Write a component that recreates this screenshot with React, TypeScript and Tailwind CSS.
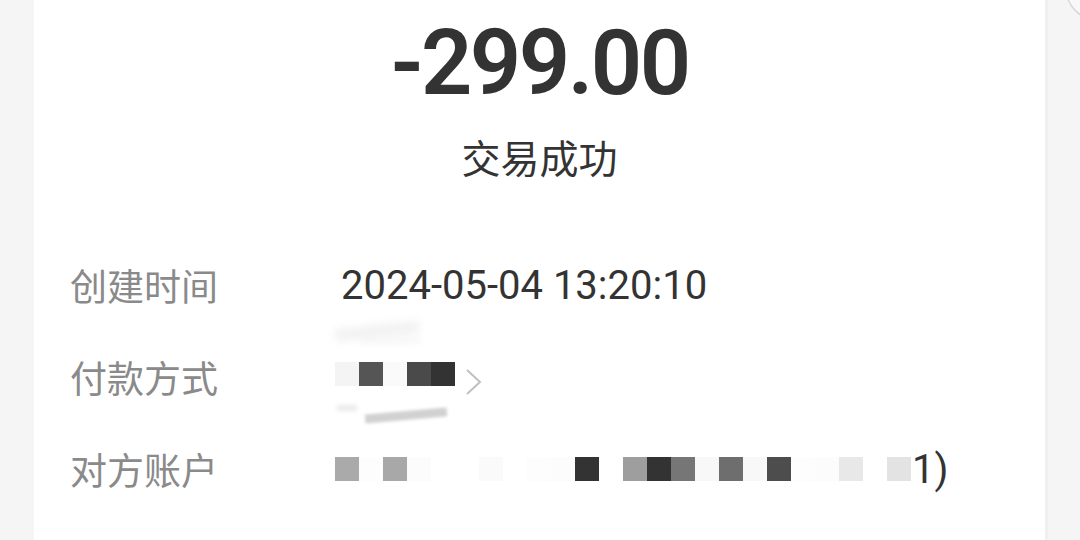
import React from "react";

const row3: string[] = [
  "#aaaaaa", "#fdfdfd", "#a8a8a8", "#fcfcfc", "#ffffff", "#ffffff", "#fafafa", "#ffffff",
  "#fdfdfd", "#fcfcfc", "#333333", "#ffffff", "#9e9e9e", "#333333", "#767676", "#f8f8f8",
  "#6e6e6e", "#f8f8f8", "#4d4d4d", "#fdfdfd", "#fcfcfc", "#e8e8e8", "#ffffff", "#e3e3e3",
];
const row2: string[] = ["#f4f4f4", "#555555", "#fafafa", "#4a4a4a", "#333333"];

function Blocks({ colors }: { colors: string[] }) {
  return (
    <div className="flex">
      {colors.map((c, i) => (
        <div key={i} className="w-[24px] h-[24px]" style={{ backgroundColor: c }} />
      ))}
    </div>
  );
}

export default function App() {
  const cjk = { fontFamily: '"Noto Sans CJK SC", "Noto Sans", sans-serif' };
  const num = { fontFamily: 'Roboto, "Liberation Sans", sans-serif' };
  return (
    <div className="w-[1080px] h-[540px] bg-[#f5f5f5] flex overflow-hidden">
      <div className="w-[34px] shrink-0" />
      <div className="w-[1011px] shrink-0 bg-white flex flex-col">
        <div className="flex flex-col items-center">
          <div
            className="mt-[19px] text-[90px] leading-[90px] font-semibold text-[#333333] tracking-[-2.5px]"
            style={num}
          >
            -299.00
          </div>
          <div className="mt-[27px] text-[39px] leading-[40px] text-[#333333]" style={cjk}>
            交易成功
          </div>
        </div>
        <div className="mt-[64px] pl-[36px] flex flex-col">
          <div className="h-[92px] flex items-center">
            <div className="w-[271px] text-[37px] text-[#8a8a8a]" style={cjk}>
              创建时间
            </div>
            <div className="text-[40px] text-[#333333]" style={num}>
              2024-05-04 13:20:10
            </div>
          </div>
          <div className="h-[92px] flex items-center">
            <div className="w-[265px] text-[37px] text-[#8a8a8a]" style={cjk}>
              付款方式
            </div>
            <div className="relative flex items-center">
              <div className="absolute left-[0px] top-[-34px] w-[84px] h-[12px] bg-[#ebebeb] rotate-[-6deg] blur-[4px] opacity-70" />
              <div className="absolute left-[26px] top-[-22px] w-[60px] h-[6px] bg-[#f0f0f0] blur-[3px] opacity-60" />
              <div className="absolute left-[30px] top-[52px] w-[82px] h-[9px] bg-[#c6c6c6] rotate-[-5deg] blur-[1.5px] opacity-80" />
              <div className="absolute left-[2px] top-[46px] w-[20px] h-[6px] bg-[#eaeaea] blur-[2px]" />
              <div className="mt-[-8px]">
                <Blocks colors={row2} />
              </div>
              <svg width="20" height="30" viewBox="0 0 20 30" className="ml-[9px] mt-[8px]">
                <path d="M3 3 L16 15 L3 27" fill="none" stroke="#c0c0c0" strokeWidth="2" />
              </svg>
            </div>
          </div>
          <div className="h-[92px] flex items-center">
            <div className="w-[265px] text-[37px] text-[#8a8a8a]" style={cjk}>
              对方账户
            </div>
            <div className="flex items-center mt-[-2px]">
              <Blocks colors={row3} />
              <div className="text-[40px] leading-[40px] text-[#333333] ml-[1px] mt-[2px]" style={num}>
                1)
              </div>
            </div>
          </div>
        </div>
      </div>
      <div className="flex-1 relative border-l-[3px] border-[#f0f0f0]">
        <svg width="40" height="40" viewBox="0 0 40 40" className="absolute left-[10px] top-[-12px]">
          <circle cx="40" cy="0" r="32" fill="#f8f8f8" stroke="#d8d8d8" strokeWidth="1.5" />
        </svg>
      </div>
    </div>
  );
}
